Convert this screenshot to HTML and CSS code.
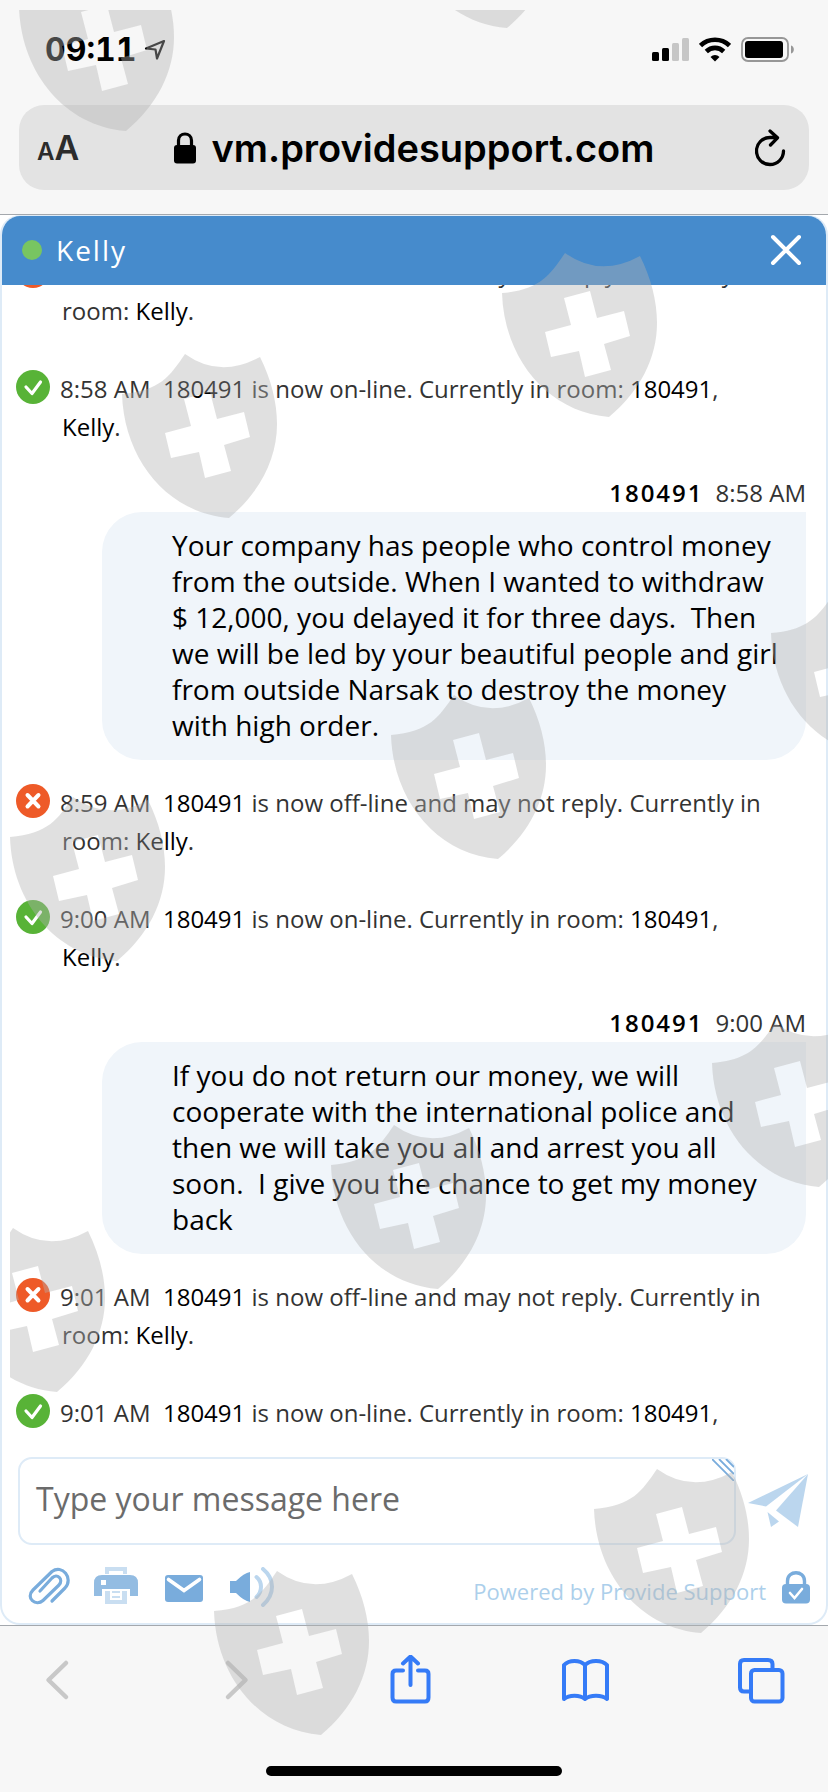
FILE: index.html
```html
<!DOCTYPE html>
<html lang="en">
<head>
	<meta charset="utf-8">
	<meta name="viewport" content="width=device-width">
	<title>Live chat</title>
	<link rel="stylesheet" href="styles.css">
</head>
<body>
<header class="browser-top">
	<div class="status">
		<div class="status-left">
			<span class="time">09:11</span>
			<svg class="location" viewBox="0 0 22 22" width="22" height="22"><path d="M20 2L2 9.500L11.500 10.500L13 19.500Z" fill="none" stroke="#000" stroke-width="2.200" stroke-linejoin="round"/></svg>
		</div>
		<div class="status-right">
			<svg viewBox="0 0 37 25" width="37" height="25">
				<rect x="0" y="15" width="7" height="9" rx="1.500"/>
				<rect x="10" y="11" width="7" height="13" rx="1.500"/>
				<rect x="20" y="6" width="7" height="18" rx="1.500" fill="#c6c6c6"/>
				<rect x="30" y="1" width="7" height="23" rx="1.500" fill="#c6c6c6"/>
			</svg>
			<svg viewBox="0 0 32 25" width="32" height="25">
				<g fill="none" stroke="#000" stroke-width="4.600"><path d="M1.500 8.500C9.500 .8 22.500 .8 30.500 8.500"/><path d="M7.300 14.500C12.200 9.700 19.800 9.700 24.700 14.500"/></g>
				<path d="M11.500 20C14 17.300 18 17.300 20.500 20L16 24.500Z"/>
			</svg>
			<svg viewBox="0 0 54 25" width="54" height="25">
				<rect x="1" y="1" width="46" height="23" rx="6" fill="none" stroke="#979797" stroke-width="1.800"/>
				<rect x="4" y="4" width="38" height="17" rx="3"/>
				<path d="M50 8.500C53.800 9.500 53.800 15.500 50 16.500Z" fill="#979797"/>
			</svg>
		</div>
	</div>
	<div class="address">
		<button class="text-size" aria-label="Text size"><small>A</small>A</button>
		<button class="site">
			<svg viewBox="0 0 22 32" width="22" height="32"><path d="M4.500 15V8.500C4.500 -.2 17.500 -.2 17.500 8.500V15" fill="none" stroke="#000" stroke-width="3.200"/><rect x="0" y="13" width="22" height="18.500" rx="3"/></svg>
			vm.providesupport.com
		</button>
		<button class="reload" aria-label="Reload">
			<svg viewBox="0 0 36 38" width="36" height="38"><path d="M28.500 22A13.500 13.500 0 1 1 15 8.500L21 8.500M15 2L22.500 8.800L15.500 16" fill="none" stroke="#000" stroke-width="3.300" stroke-linecap="round" stroke-linejoin="round"/></svg>
		</button>
	</div>
</header>

<main class="chat">
	<div class="chat-head">
		<span class="online"></span>
		<h1>Kelly</h1>
		<button aria-label="Close chat">
			<svg viewBox="0 0 32 32" width="32" height="32"><path d="M3 3L29 29M29 3L3 29" stroke="#fff" stroke-width="4" stroke-linecap="round"/></svg>
		</button>
	</div>

	<div class="messages">
		<div class="list">
			<div class="sys">
				<svg class="badge" viewBox="0 0 34 34"><use href="#off"/></svg>
				<p>8:57 AM&nbsp; <b>180491</b> is now off-line and may not reply. Currently in room: <b>Kelly</b>.</p>
			</div>
			<div class="sys">
				<svg class="badge" viewBox="0 0 34 34"><use href="#on"/></svg>
				<p>8:58 AM&nbsp; <b>180491</b> is now on-line. Currently in room: <b>180491</b>, <b>Kelly</b>.</p>
			</div>
			<div class="own">
				<div class="author"><b>180491</b><span>8:58 AM</span></div>
				<p class="bubble">Your company has people who control money from the outside. When I wanted to withdraw $ 12,000, you delayed it for three days.&nbsp; Then we will be led by your beautiful people and girl from outside Narsak to destroy the money with high order.</p>
			</div>
			<div class="sys">
				<svg class="badge" viewBox="0 0 34 34"><use href="#off"/></svg>
				<p>8:59 AM&nbsp; <b>180491</b> is now off-line and may not reply. Currently in room: <b>Kelly</b>.</p>
			</div>
			<div class="sys">
				<svg class="badge" viewBox="0 0 34 34"><use href="#on"/></svg>
				<p>9:00 AM&nbsp; <b>180491</b> is now on-line. Currently in room: <b>180491</b>, <b>Kelly</b>.</p>
			</div>
			<div class="own">
				<div class="author"><b>180491</b><span>9:00 AM</span></div>
				<p class="bubble">If you do not return our money, we will cooperate with the international police and then we will take you all and arrest you all soon.&nbsp; I give you the chance to get my money back</p>
			</div>
			<div class="sys">
				<svg class="badge" viewBox="0 0 34 34"><use href="#off"/></svg>
				<p>9:01 AM&nbsp; <b>180491</b> is now off-line and may not reply. Currently in room: <b>Kelly</b>.</p>
			</div>
			<div class="sys">
				<svg class="badge" viewBox="0 0 34 34"><use href="#on"/></svg>
				<p>9:01 AM&nbsp; <b>180491</b> is now on-line. Currently in room: <b>180491</b>, <b>Kelly</b>.</p>
			</div>
		</div>
	</div>

	<form class="composer">
		<div class="field">
			<textarea rows="1" aria-label="Message" placeholder="Type your message here"></textarea>
			<svg class="grip" viewBox="0 0 22 22" width="22" height="22"><path d="M0 0L22 22M7 0L22 15M14 0L22 8" stroke="#79acdc" stroke-width="1.800"/></svg>
		</div>
		<button type="button" aria-label="Send">
			<svg viewBox="0 0 60 54" width="60" height="54" fill="#bbd6ee"><path d="M60 0L0 29L18 32.500Z"/><path d="M60 0L50 53L28 36.500Z"/><path d="M19.500 38L31 47.500L23 53Z"/></svg>
		</button>
	</form>

	<div class="tools">
		<button aria-label="Attach file">
			<svg viewBox="0 0 42 40" width="42" height="40"><path d="M24 34L37 21C46 11 34 -3 24 4.500L5 23C-3 31 8 40 15 33.500L31 18C36 12 29 6 24 11L12 24" fill="none" stroke="#79acdc" stroke-width="3.200" stroke-linecap="round" stroke-linejoin="round"/></svg>
		</button>
		<button aria-label="Print">
			<svg viewBox="0 0 44 40" width="44" height="40"><path d="M11 7V0H33V7H29V4H15V7Z" fill="#c9def1"/><path d="M0 29V16Q0 8 8 8H36Q44 8 44 16V29H36V22H8V29Z" fill="#93bce2"/><rect x="7" y="13" width="5" height="5" fill="#fff"/><path d="M11 24H16V33H28V24H33V37H11Z" fill="#c9def1"/><path d="M18 25H26M18 30H26" stroke="#c9def1" stroke-width="2"/></svg>
		</button>
		<button aria-label="Email transcript">
			<svg viewBox="0 0 44 40" width="44" height="40"><rect x="3" y="8" width="38" height="27" rx="3" fill="#79acdc"/><path d="M6.500 12.500L22 23.500L37.500 12.500" fill="none" stroke="#fff" stroke-width="3.600" stroke-linecap="round"/></svg>
		</button>
		<button aria-label="Sound">
			<svg viewBox="0 0 44 40" width="44" height="40"><path d="M0 14H6Q14 6 20 5V35Q14 34 6 26H0Z" fill="#79acdc"/><path d="M26.500 10C32.500 15 32.500 24.500 26.500 30M33 2C45 12 45 27 33 38" fill="none" stroke="#bbd6ee" stroke-width="4" stroke-linecap="round"/></svg>
		</button>
		<a href="#">Powered by Provide Support</a>
		<svg class="secure" viewBox="0 0 28 33" width="28" height="33"><path d="M5.500 15V10C5.500 -1 22.500 -1 22.500 10V15" fill="none" stroke="#79acdc" stroke-width="3.400"/><rect x="0" y="13" width="28" height="19.500" rx="4" fill="#79acdc"/><path d="M8 22L12.500 27L20 18" fill="none" stroke="#fff" stroke-width="2.600" stroke-linecap="round"/></svg>
	</div>
</main>

<footer class="browser-bottom">
	<nav>
		<button aria-label="Back"><svg viewBox="0 0 50 50" width="50" height="50"><path d="M34 8L16.500 25L34 42" stroke="#c8c8c8" stroke-width="4.500"/></svg></button>
		<button aria-label="Forward"><svg viewBox="0 0 50 50" width="50" height="50"><path d="M20 8L37.500 25L20 42" stroke="#c8c8c8" stroke-width="4.500"/></svg></button>
		<button aria-label="Share"><svg viewBox="0 0 50 50" width="50" height="50"><path d="M19 15.500H12Q8.500 15.500 8.500 19V42.500Q8.500 46.500 12 46.500H41Q44.500 46.500 44.500 42.500V19Q44.500 15.500 41 15.500H34M26.500 30V2M19 8.500L26.500 1.500L34 8.500"/></svg></button>
		<button aria-label="Bookmarks"><svg viewBox="0 0 50 50" width="50" height="50"><path d="M25 10C20 4.500 9 4.500 4 10V44C9 39.500 20 39.500 25 44C30 39.500 42 39.500 47 44V10C42 4.500 30 4.500 25 10V44"/></svg></button>
		<button aria-label="Tabs"><svg viewBox="0 0 50 50" width="50" height="50"><rect x="15" y="15" width="31.500" height="31.500" rx="3.500"/><path d="M15 36.500H8Q4 36.500 4 32.500V9Q4 5 8 5H32Q36.500 5 36.500 9V15"/></svg></button>
	</nav>
	<div class="home"></div>
</footer>

<!-- shared badges -->
<svg class="defs" width="0" height="0">
	<defs>
		<g id="on"><circle cx="17" cy="17" r="17" fill="#58b337"/><path d="M10 17L16 23.500L24.500 12" fill="none" stroke="#fff" stroke-width="3.200" stroke-linecap="round" stroke-linejoin="round"/></g>
		<g id="off"><circle cx="17" cy="17" r="17" fill="#ee5a28"/><path d="M11.500 11L22.500 22.500M22.500 11L11.500 22.500" stroke="#fff" stroke-width="4" stroke-linecap="round"/></g>
		<path id="shield" fill-rule="evenodd" d="M0 40C38 37 48 22 63 0Q98 25 138 3C149 25 155 48 155 70C155 105 138 138 107 164C45 159 2 105 0 40ZM62 45L88 38L95 65L122 58L128 83L102 91L109 117L83 124L77 98L49 104L43 79L69 72Z"/>
	</defs>
</svg>

<!-- watermark over everything -->
<div class="watermark">
	<svg viewBox="10 10 818 1782" width="818" height="1782" aria-hidden="true">
		<use href="#shield" x="19" y="-33"/>
		<use href="#shield" x="400" y="-136"/>
		<use href="#shield" x="122" y="354"/>
		<use href="#shield" x="502" y="253"/>
		<use href="#shield" x="771" y="593"/>
		<use href="#shield" x="391" y="695"/>
		<use href="#shield" x="10" y="797"/>
		<use href="#shield" x="712" y="1023"/>
		<use href="#shield" x="331" y="1125"/>
		<use href="#shield" x="-50" y="1228"/>
		<use href="#shield" x="594" y="1469"/>
		<use href="#shield" x="214" y="1571"/>
	</svg>
</div>
</body>
</html>
```
FILE: styles.css
```css
*{
	box-sizing: border-box;
}
body{
	margin: 0;
	position: relative;
	height: 100vh;
	display: flex;
	flex-direction: column;
	overflow: hidden;
	background-color: #fff;
	font-family: "Open Sans", sans-serif;
}
button{
	margin: 0;
	padding: 0;
	border: 0;
	background: none;
	color: inherit;
	font-family: inherit;
}
svg{
	display: block;
	flex-shrink: 0;
}
h1, p{
	margin: 0;
}

/* browser bars */
.browser-top{
	padding: 0 19px 24px;
	background-color: #f7f7f7;
	border-bottom: 1px solid #a4a8ad;
	font-family: Inter, sans-serif;
}
.status{
	height: 105px;
	display: flex;
	justify-content: space-between;
	align-items: center;
	padding: 0 14px 6px 26px;
}
.status-left, .status-right{
	display: flex;
	align-items: center;
}
.status-left{
	gap: 8px;
}
.status-right{
	gap: 10px;
}
.time{
	font-size: 32px;
	line-height: 40px;
	font-weight: 700;
	font-variant-numeric: tabular-nums;
}
.address{
	height: 85px;
	display: grid;
	grid-template-columns: 1fr auto 1fr;
	align-items: center;
	padding: 0 18px;
	border-radius: 25px;
	background-color: #e3e3e3;
}
.text-size{
	justify-self: start;
	font-size: 34px;
	font-weight: 600;
	color: #2c2c2c;
}
.text-size small{
	font-size: 24px;
}
.site{
	display: flex;
	align-items: center;
	gap: 16px;
	font-size: 38px;
	font-weight: 600;
	color: #000;
}
.reload{
	justify-self: end;
}

/* chat window */
.chat{
	flex: 1;
	min-height: 0;
	display: flex;
	flex-direction: column;
	border: 2px solid #deebf7;
	border-top-width: 1px;
	border-radius: 20px;
	overflow: hidden;
}
.chat-head{
	height: 69px;
	flex-shrink: 0;
	display: flex;
	align-items: center;
	gap: 14px;
	padding: 0 24px 2px 20px;
	background-color: #468bcc;
	color: #fff;
}
.chat-head h1{
	flex: 1;
	font-size: 28px;
	line-height: 38px;
	font-weight: 500;
	letter-spacing: 2px;
}
.online{
	width: 20px;
	height: 20px;
	border-radius: 50%;
	background-color: #78c561;
}
.messages{
	flex: 1;
	min-height: 0;
	overflow: hidden;
	font-size: 24px;
	line-height: 38px;
	color: #333;
}
/* scrolled so that the oldest line is half hidden */
.list{
	margin-top: -31px;
	padding: 0 20px 0 14px;
}
.messages b{
	font-weight: 400;
	color: #000;
}
.sys{
	display: flex;
	gap: 12px;
	padding-right: 26px;
}
.sys p{
	text-indent: -2px;
}
.sys + .sys{
	margin-top: 40px;
}
.own{
	margin-top: 28px;
}
.own + .sys{
	margin-top: 24px;
}
.badge{
	width: 34px;
	height: 34px;
}
.author{
	display: flex;
	justify-content: flex-end;
	gap: 12px;
}
.author b{
	font-weight: 600;
	letter-spacing: 2px;
}
.bubble{
	margin-left: 86px;
	padding: 15px 24px 17px 70px;
	border-radius: 40px 0 40px 40px;
	background-color: #f0f5fa;
	color: #000;
	font-size: 28px;
	line-height: 36px;
}

/* message box and tools */
.composer{
	display: flex;
	align-items: center;
	gap: 12px;
	padding: 20px 18px 0 16px;
}
.field{
	flex: 1;
	position: relative;
}
.field textarea{
	display: block;
	width: 100%;
	height: 88px;
	padding: 16px;
	border: 2px solid #deebf7;
	border-radius: 14px;
	outline: 0;
	resize: none;
	overflow: hidden;
	background-color: #fff;
	font-family: inherit;
	font-size: 32px;
	line-height: 48px;
}
.field textarea::placeholder{
	color: #6b6b6b;
	opacity: 1;
}
.grip{
	position: absolute;
	top: 2px;
	right: 2px;
}
.tools{
	display: flex;
	align-items: center;
	gap: 24px;
	padding: 22px 16px 16px 26px;
}
.tools a{
	flex: 1;
	margin-right: -8px;
	padding-top: 8px;
	text-align: right;
	font-size: 22px;
	line-height: 32px;
	color: #accfeb;
	text-decoration: none;
}

.browser-bottom{
	height: 167px;
	flex-shrink: 0;
	display: flex;
	flex-direction: column;
	justify-content: space-between;
	padding: 29px 0 16px;
	border-top: 1px solid #a4a8ad;
	background-color: #f7f7f7;
}
.browser-bottom nav{
	display: flex;
	justify-content: space-between;
	padding: 0 42px 0 32px;
}
.browser-bottom nav svg{
	fill: none;
	stroke: #357bf7;
	stroke-width: 4;
	stroke-linecap: round;
	stroke-linejoin: round;
}
.home{
	width: 296px;
	height: 10px;
	align-self: center;
	border-radius: 5px;
	background-color: #000;
}

.defs{
	position: absolute;
}
.watermark{
	position: absolute;
	top: 10px;
	left: 10px;
	right: 0;
	bottom: 0;
	overflow: hidden;
	pointer-events: none;
}
.watermark svg{
	fill: #b2b2b2;
	fill-opacity: .4;
}
```
